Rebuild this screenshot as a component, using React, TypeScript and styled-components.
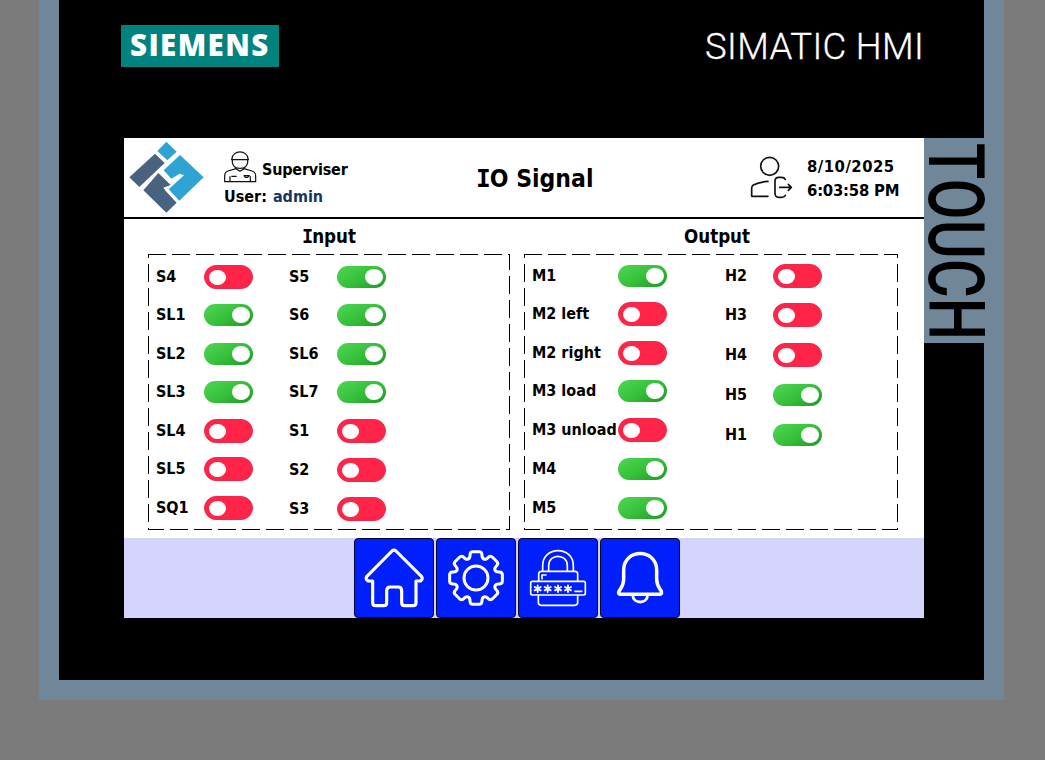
import React from 'react';
import styled, { createGlobalStyle } from 'styled-components';

const GlobalStyle = createGlobalStyle`
  * { box-sizing: border-box; }
  body {
    margin: 0;
    background: #7b7b7b;
    color: #000;
    font-family: "DejaVu Sans Condensed", "DejaVu Sans", sans-serif;
    font-stretch: condensed;
    font-weight: 700;
    overflow: hidden;
  }
`;

const Page = styled.div`
  width: 1045px;
  height: 760px;
  padding-left: 39px;
  background: #7b7b7b;
`;

const Bezel = styled.div`
  width: 965px;
  height: 700px;
  padding: 0 20px 20px;
  background: #70879a;
`;

const Device = styled.div`
  width: 925px;
  height: 680px;
  background: #000;
`;

const BrandBar = styled.div`
  display: flex;
  justify-content: space-between;
  height: 138px;
  padding: 25px 60px 0 62px;
`;

const BrandLogo = styled.div`
  width: 158px;
  height: 42px;
  padding-left: 9px;
  background: #00827f;
  color: #fff;
  font: 800 29.5px/40px "Open Sans", "Noto Sans", sans-serif;
  letter-spacing: 1.4px;
`;

const ModelName = styled.div`
  height: 42px;
  color: #fff;
  font: 300 36.5px/43px Roboto, sans-serif;
  letter-spacing: 0.35px;
  white-space: nowrap;
  -webkit-text-stroke: 0.3px #fff;
`;

const Middle = styled.div`
  display: flex;
  align-items: flex-start;
  padding-left: 65px;
`;

const Screen = styled.main`
  display: flex;
  flex-direction: column;
  width: 800px;
  height: 480px;
  background: #fff;
`;

const TouchStrip = styled.aside`
  width: 60px;
  height: 205px;
  padding: 5px 0 0 2px;
  background: #70879a;
`;

const TouchText = styled.div`
  width: 60px;
  font: 500 78.5px/60px Roboto, sans-serif;
  writing-mode: vertical-rl;
  transform: scaleY(0.76);
  transform-origin: 0 0;
  white-space: nowrap;
`;

const Header = styled.header`
  display: flex;
  height: 81px;
  border-bottom: 2px solid #000;
`;

const LogoCell = styled.div`
  width: 100px;
  height: 79px;
`;

const UserCell = styled.div`
  width: 253px;
  padding-top: 12px;
`;

const RoleRow = styled.div`
  display: flex;
  align-items: flex-start;
  height: 36px;
`;

const RoleName = styled.span`
  margin: 10px 0 0 5px;
  font-size: 16px;
  line-height: 20px;
  letter-spacing: -0.2px;
`;

const UserRow = styled.div`
  display: flex;
  gap: 6px;
  font-size: 16px;
  line-height: 22px;
`;

const UserName = styled.span`
  color: #17365f;
`;

const Title = styled.h1`
  width: 273px;
  margin: 0 0 0 -1px;
  padding-top: 26px;
  font-size: 24.5px;
  line-height: 30px;
`;

const SerifI = styled.span`
  font-family: "DejaVu Sans Mono", monospace;
  letter-spacing: -1px;
`;

const Clock = styled.div`
  padding: 17px 0 0 13px;
  font-size: 16.5px;
  line-height: 24px;
`;

const ClockLine = styled.div<{ $spacing: number }>`
  letter-spacing: ${(p) => p.$spacing}px;
`;

const Panels = styled.section`
  display: flex;
  gap: 14px;
  height: 319px;
  padding-left: 24px;
`;

const Panel = styled.div<{ $w: number }>`
  width: ${(p) => p.$w}px;
`;

const PanelTitle = styled.h2<{ $indent: number }>`
  height: 35px;
  margin: 0;
  padding-left: ${(p) => p.$indent}px;
  font-size: 18.6px;
  line-height: 35px;
`;

const dash = (dir: string, travelled: number) => {
  const s = -(travelled % 24);
  return `repeating-linear-gradient(to ${dir}, #000 ${s}px ${s + 18}px, transparent ${s + 18}px ${s + 24}px)`;
};

const DashedFrame = styled.div<{ $w: number; $h: number; $cols: string; $pad: string }>`
  display: grid;
  grid-template-columns: ${(p) => p.$cols};
  width: ${(p) => p.$w}px;
  height: ${(p) => p.$h}px;
  padding: ${(p) => p.$pad};
  background:
    ${(p) => dash('right', 0)} 0 0 / 100% 1px no-repeat,
    ${(p) => dash('bottom', p.$w)} 100% 0 / 1px 100% no-repeat,
    ${(p) => dash('left', p.$w + p.$h)} 0 100% / 100% 1px no-repeat,
    ${(p) => dash('top', 2 * p.$w + p.$h)} 0 0 / 1px 100% no-repeat;
`;

const SignalRow = styled.div<{ $pitch: number; $label: number }>`
  display: grid;
  grid-template-columns: ${(p) => p.$label}px 49px;
  height: ${(p) => p.$pitch}px;
  font-size: 16px;
  line-height: 26px;
  white-space: nowrap;
`;

const Toggle = styled.span<{ $on: boolean }>`
  display: flex;
  align-items: center;
  justify-content: ${(p) => (p.$on ? 'flex-end' : 'flex-start')};
  width: 49px;
  height: ${(p) => (p.$on ? 22 : 24)}px;
  margin-top: ${(p) => (p.$on ? 2 : 1)}px;
  padding: ${(p) => (p.$on ? '0 3px' : '0 4px')};
  border: ${(p) => (p.$on ? 'none' : '1px solid #ee2a4c')};
  border-radius: 12px;
  background: ${(p) => (p.$on ? 'linear-gradient(150deg, #4bd551 5%, #34be38 55%, #1f9c26 95%)' : '#ff2448')};
  &::after {
    content: "";
    width: ${(p) => (p.$on ? 18 : 16.5)}px;
    height: ${(p) => (p.$on ? 16 : 15)}px;
    border-radius: 50%;
    background: #fff;
  }
`;

const NavBar = styled.nav`
  display: flex;
  gap: 2px;
  height: 80px;
  padding-left: 230px;
  background: #d5d4ff;
`;

const NavButton = styled.button`
  width: 80px;
  height: 80px;
  padding: 0;
  border: 1px solid #00063c;
  border-radius: 4px;
  background: #001ffa;
  svg { display: block; margin: -1px; }
`;

type Signal = [name: string, on: boolean, pitch: number];

const inputA: Signal[] = [['S4', false, 38], ['SL1', true, 39], ['SL2', true, 38], ['SL3', true, 39], ['SL4', false, 38], ['SL5', false, 39], ['SQ1', false, 26]];
const inputB: Signal[] = [['S5', true, 38], ['S6', true, 39], ['SL6', true, 38], ['SL7', true, 39], ['S1', false, 39], ['S2', false, 39], ['S3', false, 26]];
const outputA: Signal[] = [['M1', true, 38], ['M2 left', false, 39], ['M2 right', false, 38], ['M3 load', true, 39], ['M3 unload', false, 39], ['M4', true, 39], ['M5', true, 26]];
const outputB: Signal[] = [['H2', false, 39], ['H3', false, 40], ['H4', false, 40], ['H5', true, 40], ['H1', true, 26]];

const SignalColumn = ({ items, label }: { items: Signal[]; label: number }) => (
  <div>
    {items.map(([name, on, pitch]) => (
      <SignalRow key={name} $pitch={pitch} $label={label}>
        <span>{name}</span>
        <Toggle $on={on} role="switch" aria-checked={on} />
      </SignalRow>
    ))}
  </div>
);

const CompanyLogo = () => (
  <svg width="100" height="79" viewBox="0 9 300 237">
    <g fill="#2fa4d4">
      <path d="M127 20 158 50 130 76 100 48Z" />
      <path d="M168 60 239 127 166 197 134 163 180 121 167 116 142 131 119 106Z" />
    </g>
    <g fill="#48627f">
      <path d="M93 56 122 84 46 156 16 127Z" />
      <path d="M103 114 140 150 118 158 127 170 158 203 127 233 58 166Z" />
    </g>
  </svg>
);

const WorkerIcon = () => (
  <svg width="33" height="34" viewBox="300 48 99 102" fill="none" stroke="#111" strokeWidth="3.6" strokeLinejoin="round">
    <path d="M324 77V74C326 47 370 47 372 74V77M321 77H375M325 78V86C329 109 367 109 371 86V78M336 100V104L348 112 360 104V100M336 104 312 111Q302 114 302 126V143H395V126Q395 114 384 111L360 104M318 127V143M379 127V143M322 127H338M360 125H376L371 130H364Z" />
  </svg>
);

const LogoutIcon = () => (
  <svg width="45" height="79" viewBox="27 9 135 237" fill="none" stroke="#111" strokeWidth="5" strokeLinecap="round" strokeLinejoin="round">
    <circle cx="89" cy="94" r="27" />
    <path d="M84 139Q58 141 40 150Q35 153 35 160V184H84M136 133Q133 127 124 127H116Q105 127 105 138V175Q105 187 116 187H124Q133 187 136 181M119 157H154M145 148 154 157 145 166" />
  </svg>
);

const gearPath = (() => {
  const pts: [number, number][] = [];
  for (let i = 0; i < 8; i++) {
    [[-17, 62], [-12.5, 81], [12.5, 81], [17, 62]].forEach(([a, r]) => {
      const t = ((i * 45 + a - 90) * Math.PI) / 180;
      pts.push([393 + r * Math.cos(t), 144 + r * Math.sin(t)]);
    });
  }
  const n = pts.length;
  const toward = (p: number[], q: number[]) => {
    const len = Math.hypot(q[0] - p[0], q[1] - p[1]);
    const k = Math.min(8.5, len / 2) / len;
    return `${(p[0] + (q[0] - p[0]) * k).toFixed(1)} ${(p[1] + (q[1] - p[1]) * k).toFixed(1)}`;
  };
  return pts.map((p, i) => `${i ? 'L' : 'M'}${toward(p, pts[(i + n - 1) % n])}Q${p[0].toFixed(1)} ${p[1].toFixed(1)} ${toward(p, pts[(i + 1) % n])}`).join('') + 'Z';
})();

const stroke = { fill: 'none', stroke: '#fff', strokeLinecap: 'round', strokeLinejoin: 'round' } as const;

const HomeIcon = () => (
  <svg width="80" height="80" viewBox="27 24 240 240" {...stroke} strokeWidth="9.5">
    <path d="M141 63Q147 58 153 63L230 140Q235 148 226 153H213V219Q213 227 204 227H179Q170 227 170 219V182Q170 171 159 171H136Q125 171 125 182V219Q125 227 116 227H92Q83 227 83 219V153H70Q60 148 65 140Z" />
  </svg>
);

const GearIcon = () => (
  <svg width="80" height="80" viewBox="273 24 240 240" {...stroke} strokeWidth="9">
    <path d={gearPath} />
    <circle cx="393" cy="144" r="36" />
  </svg>
);

const star = (x: number) => `M${x} 166V186M${x - 9} 171 ${x + 9} 181M${x + 9} 171 ${x - 9} 181`;

const LockIcon = () => (
  <svg width="80" height="80" viewBox="24 24 240 240" {...stroke} strokeWidth="5">
    <path d="M98 123V107C98 47 190 47 190 107V123M116 123V107C116 70 172 70 172 107V123M86 154V132Q86 124 94 124H195Q203 124 203 132V154M85 195V217Q85 226 94 226H194Q203 226 203 217V195M96 146V135H108" />
    <rect x="62" y="154" width="164" height="41" rx="5" />
    <path strokeWidth="5.5" d={[83, 113, 144, 174].map(star).join('') + 'M195 184H215'} />
  </svg>
);

const BellIcon = () => (
  <svg width="80" height="80" viewBox="270 24 240 240" {...stroke} strokeWidth="10.5">
    <path d="M341 121C341 54 440 54 440 121V148C440 166 448 174 454 184Q457 193 448 193H333Q323 193 327 184C333 174 341 166 341 148Z" />
    <path strokeWidth="8.5" d="M368 195C369 223 412 223 413 195" />
  </svg>
);

const navItems = [
  ['Home', HomeIcon],
  ['Settings', GearIcon],
  ['Password', LockIcon],
  ['Alarms', BellIcon],
] as const;

export default function App() {
  return (
    <>
      <GlobalStyle />
      <Page>
        <Bezel>
          <Device>
            <BrandBar>
              <BrandLogo>SIEMENS</BrandLogo>
              <ModelName>SIMATIC HMI</ModelName>
            </BrandBar>
            <Middle>
              <Screen>
                <Header>
                  <LogoCell><CompanyLogo /></LogoCell>
                  <UserCell>
                    <RoleRow><WorkerIcon /><RoleName>Superviser</RoleName></RoleRow>
                    <UserRow><span>User:</span><UserName>admin</UserName></UserRow>
                  </UserCell>
                  <Title><SerifI>I</SerifI>O Signal</Title>
                  <LogoutIcon />
                  <Clock>
                    <ClockLine $spacing={0.5}>8/10/2025</ClockLine>
                    <ClockLine $spacing={-0.2}>6:03:58 PM</ClockLine>
                  </Clock>
                </Header>
                <Panels>
                  <Panel $w={362}>
                    <PanelTitle $indent={154}><SerifI>I</SerifI>nput</PanelTitle>
                    <DashedFrame $w={362} $h={276} $cols="133px 1fr" $pad="10px 0 0 8px">
                      <SignalColumn items={inputA} label={48} />
                      <SignalColumn items={inputB} label={48} />
                    </DashedFrame>
                  </Panel>
                  <Panel $w={374}>
                    <PanelTitle $indent={160}>Output</PanelTitle>
                    <DashedFrame $w={374} $h={276} $cols="193px 1fr" $pad="9px 0 0 8px">
                      <SignalColumn items={outputA} label={86} />
                      <SignalColumn items={outputB} label={48} />
                    </DashedFrame>
                  </Panel>
                </Panels>
                <NavBar>
                  {navItems.map(([name, Icon]) => (
                    <NavButton key={name} aria-label={name}><Icon /></NavButton>
                  ))}
                </NavBar>
              </Screen>
              <TouchStrip><TouchText>TOUCH</TouchText></TouchStrip>
            </Middle>
          </Device>
        </Bezel>
      </Page>
    </>
  );
}
